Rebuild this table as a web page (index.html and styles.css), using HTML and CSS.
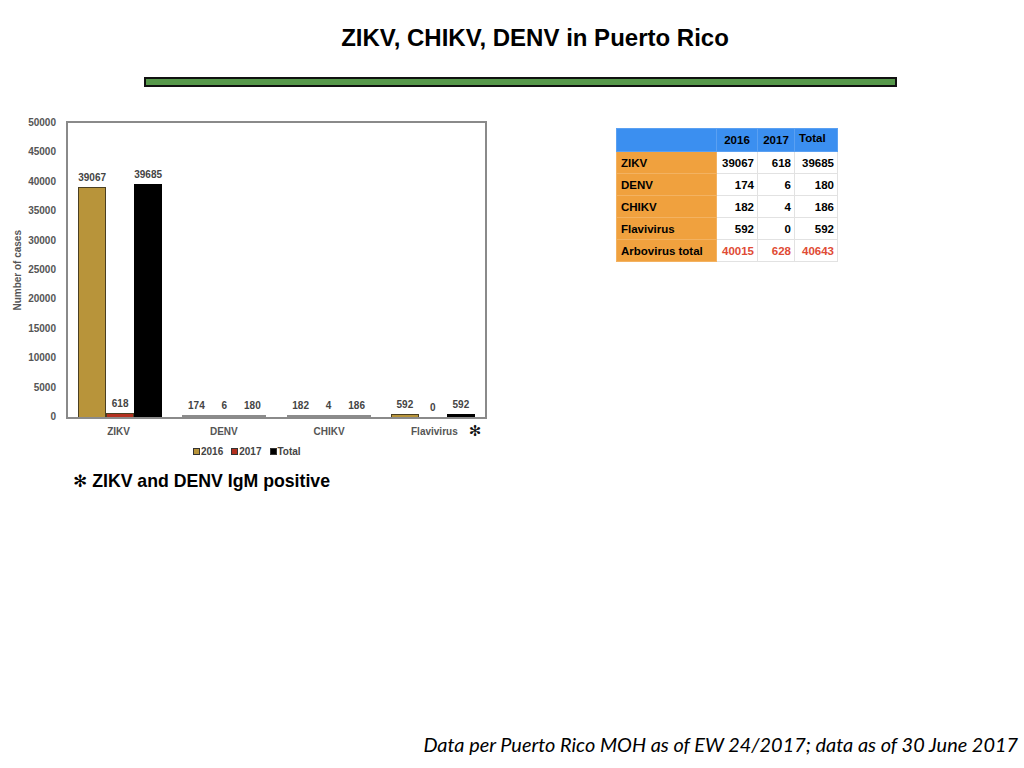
FILE: index.html
```html
<!DOCTYPE html>
<html lang="en">
<head>
<meta charset="utf-8">
<title>ZIKV, CHIKV, DENV in Puerto Rico</title>
<link rel="stylesheet" href="styles.css">
</head>
<body>
<div class="slide">
  <h1 class="title">ZIKV, CHIKV, DENV in Puerto Rico</h1>
  <div class="rule"></div>

  <div class="content">
    <div class="chart">
      <div class="chart-row">
        <div class="y-title"><span>Number of cases</span></div>
        <div class="y-ticks">
          <span>50000</span><span>45000</span><span>40000</span><span>35000</span>
          <span>30000</span><span>25000</span><span>20000</span><span>15000</span>
          <span>10000</span><span>5000</span><span>0</span>
        </div>
        <div class="plot">
          <div class="group">
            <div class="bar-col"><span class="val">39067</span><div class="bar y2016" style="height:229.7px"></div></div>
            <div class="bar-col"><span class="val">618</span><div class="bar y2017" style="height:3.6px"></div></div>
            <div class="bar-col"><span class="val">39685</span><div class="bar total" style="height:233.4px"></div></div>
          </div>
          <div class="group">
            <div class="bar-col"><span class="val">174</span><div class="bar y2016 tiny" style="height:0px"></div></div>
            <div class="bar-col"><span class="val">6</span><div class="bar y2017 tiny" style="height:0px"></div></div>
            <div class="bar-col"><span class="val">180</span><div class="bar total tiny" style="height:0px"></div></div>
          </div>
          <div class="group">
            <div class="bar-col"><span class="val">182</span><div class="bar y2016 tiny" style="height:0px"></div></div>
            <div class="bar-col"><span class="val">4</span><div class="bar y2017 tiny" style="height:0px"></div></div>
            <div class="bar-col"><span class="val">186</span><div class="bar total tiny" style="height:0px"></div></div>
          </div>
          <div class="group">
            <div class="bar-col"><span class="val">592</span><div class="bar y2016" style="height:3.5px"></div></div>
            <div class="bar-col"><span class="val">0</span><div class="bar empty" style="height:0px"></div></div>
            <div class="bar-col"><span class="val">592</span><div class="bar total" style="height:3.5px"></div></div>
          </div>
        </div>
      </div>
      <div class="x-labels">
        <span>ZIKV</span><span>DENV</span><span>CHIKV</span>
        <span class="flavi">Flavivirus<span class="star">✻</span></span>
      </div>
      <div class="legend">
        <span class="key"><i class="sw y2016"></i>2016</span>
        <span class="key"><i class="sw y2017"></i>2017</span>
        <span class="key"><i class="sw total"></i>Total</span>
      </div>
      <p class="note"><span class="note-star">✻</span> ZIKV and DENV IgM positive</p>
    </div>

    <table class="cases">
      <thead>
        <tr><th class="corner"></th><th class="c">2016</th><th class="c">2017</th><th class="tot">Total</th></tr>
      </thead>
      <tbody>
        <tr><th>ZIKV</th><td>39067</td><td>618</td><td>39685</td></tr>
        <tr><th>DENV</th><td>174</td><td>6</td><td>180</td></tr>
        <tr><th>CHIKV</th><td>182</td><td>4</td><td>186</td></tr>
        <tr><th>Flavivirus</th><td>592</td><td>0</td><td>592</td></tr>
        <tr class="sum"><th>Arbovirus total</th><td>40015</td><td>628</td><td>40643</td></tr>
      </tbody>
    </table>
  </div>

  <p class="source">Data per Puerto Rico MOH as of EW 24/2017; data as of 30 June 2017</p>
</div>
</body>
</html>
```

FILE: styles.css
```css
* { box-sizing: border-box; }

html, body {
  margin: 0;
  padding: 0;
  background: #ffffff;
}

.slide {
  width: 1024px;
  height: 768px;
  display: flex;
  flex-direction: column;
  font-family: "Liberation Sans", Arial, sans-serif;
  color: #000;
  overflow: hidden;
}

.title {
  margin: 0;
  padding: 24px 0 0 46px;
  font-size: 24px;
  line-height: 28px;
  font-weight: bold;
  text-align: center;
}

.rule {
  margin: 25px 0 0 144px;
  width: 753px;
  height: 10px;
  background: #56984a;
  border: 2px solid #111;
}

.content {
  display: flex;
  margin-top: 34px;
}

.chart {
  width: 616px;
  flex: none;
}

.chart-row {
  display: flex;
  align-items: flex-start;
}

.y-title {
  width: 24px;
  height: 298px;
  padding-left: 12px;
  display: flex;
  align-items: center;
}

.y-title span {
  writing-mode: vertical-rl;
  transform: rotate(180deg);
  font-size: 10px;
  font-weight: bold;
  color: #555;
  line-height: 12px;
  white-space: nowrap;
}

.y-ticks {
  width: 32px;
  height: 306px;
  margin-top: -4px;
  margin-right: 10px;
  display: flex;
  flex-direction: column;
  justify-content: space-between;
  align-items: flex-end;
}

.y-ticks span {
  font-size: 10px;
  line-height: 12px;
  font-weight: bold;
  color: #555;
}

.plot {
  width: 421px;
  height: 298px;
  border: 2px solid #8a8a8a;
  display: flex;
}

.group {
  flex: 1;
  display: flex;
  justify-content: center;
  align-items: flex-end;
}

.bar-col {
  width: 28px;
  display: flex;
  flex-direction: column;
  align-items: center;
}

.val {
  font-size: 10px;
  line-height: 11px;
  font-weight: bold;
  color: #444;
  margin-bottom: 4px;
}

.bar {
  width: 100%;
  border: 1px solid #4a3f22;
  border-bottom: none;
}

.bar.y2016 { background: #b8943a; }
.bar.y2017 { background: #b3301f; }
.bar.total { background: #000; border-color: #000; }
.bar.tiny { border: none; border-top: 2px solid #8c8c8c; background: none; }
.bar.empty { border: none; background: none; }

.x-labels {
  margin: 3px 0 0 66px;
  width: 421px;
  display: flex;
}

.x-labels > span {
  flex: 1;
  text-align: center;
  font-size: 10px;
  line-height: 11px;
  font-weight: bold;
  color: #555;
}

.x-labels .flavi {
  position: relative;
}

.star {
  position: absolute;
  left: 87px;
  top: -2px;
  font-family: "DejaVu Sans", sans-serif;
  font-size: 15px;
  line-height: 15px;
  font-weight: bold;
  color: #111;
}

.legend {
  margin-top: 9px;
  padding-left: 193px;
  display: flex;
  gap: 8px;
  font-size: 10px;
  line-height: 11px;
  font-weight: bold;
  color: #444;
}

.key {
  display: flex;
  align-items: center;
  gap: 1px;
}

.sw {
  display: inline-block;
  width: 7px;
  height: 7px;
  border: 1px solid #333;
}

.sw.y2016 { background: #b8943a; }
.sw.y2017 { background: #b3301f; }
.sw.total { background: #000; }

.note {
  margin: 14px 0 0 73px;
  font-size: 17.7px;
  line-height: 20px;
  font-weight: bold;
}

.note-star {
  font-family: "DejaVu Sans", sans-serif;
  font-weight: normal;
  font-size: 17px;
}

.cases {
  margin-top: 7px;
  border-collapse: collapse;
  font-size: 11.5px;
  font-weight: bold;
  height: 133px;
}

.cases th, .cases td {
  padding: 0 4px;
  height: 22px;
  border: 1px solid #e2e2e2;
  white-space: nowrap;
}

.cases thead th {
  background: #3b8ff0;
  height: 23px;
  border-color: #5aa0f2;
  text-align: center;
  color: #000;
}

.cases thead th.corner { width: 100px; }
.cases thead th.c:nth-child(2) { width: 41px; }
.cases thead th.c:nth-child(3) { width: 37px; }
.cases thead th.tot {
  width: 43px;
  text-align: left;
  vertical-align: top;
  padding-top: 3px;
}

.cases tbody th {
  background: #f0a13e;
  border-color: #f3b261;
  text-align: left;
  font-weight: bold;
}

.cases td {
  text-align: right;
  padding-right: 3px;
  padding-left: 2px;
}

.cases tr.sum td {
  color: #e04b35;
}

.source {
  margin: auto 0 0 0;
  padding: 0 6px 12px 0;
  text-align: right;
  font-family: Lato, "Open Sans", sans-serif;
  font-style: italic;
  font-size: 19.9px;
  line-height: 24px;
  color: #000;
}
```
